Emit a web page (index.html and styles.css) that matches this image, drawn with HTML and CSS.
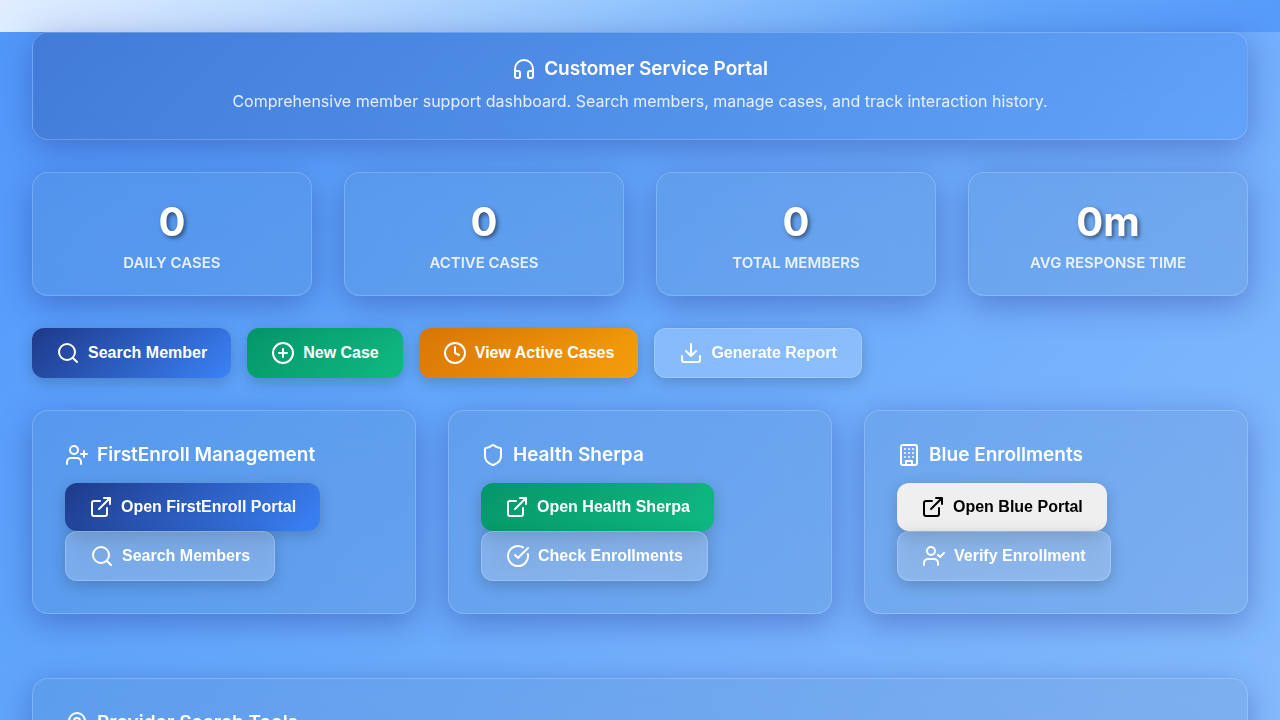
FILE: index.html
```html
<!DOCTYPE html>
<html lang="en">
<head>
<meta charset="utf-8">
<meta name="viewport" content="width=device-width, initial-scale=1">
<title>Customer Service Portal</title>
<link rel="stylesheet" href="styles.css">
</head>
<body>
<svg class="sprite" aria-hidden="true">
  <symbol id="i-headphones" viewBox="0 0 24 24"><path d="M3 14h3a2 2 0 0 1 2 2v3a2 2 0 0 1-2 2H5a2 2 0 0 1-2-2v-7a9 9 0 0 1 18 0v7a2 2 0 0 1-2 2h-1a2 2 0 0 1-2-2v-3a2 2 0 0 1 2-2h3"/></symbol>
  <symbol id="i-search" viewBox="0 0 24 24"><circle cx="11" cy="11" r="8"/><path d="m21 21-4.3-4.3"/></symbol>
  <symbol id="i-plus" viewBox="0 0 24 24"><circle cx="12" cy="12" r="10"/><path d="M8 12h8M12 8v8"/></symbol>
  <symbol id="i-clock" viewBox="0 0 24 24"><circle cx="12" cy="12" r="10"/><path d="M12 6v6l4 2"/></symbol>
  <symbol id="i-download" viewBox="0 0 24 24"><path d="M21 15v4a2 2 0 0 1-2 2H5a2 2 0 0 1-2-2v-4M7 10l5 5 5-5M12 15V3"/></symbol>
  <symbol id="i-user-plus" viewBox="0 0 24 24"><path d="M16 21v-2a4 4 0 0 0-4-4H6a4 4 0 0 0-4 4v2"/><circle cx="9" cy="7" r="4"/><path d="M19 8v6M22 11h-6"/></symbol>
  <symbol id="i-user-check" viewBox="0 0 24 24"><path d="M16 21v-2a4 4 0 0 0-4-4H6a4 4 0 0 0-4 4v2"/><circle cx="9" cy="7" r="4"/><path d="m16 11 2 2 4-4"/></symbol>
  <symbol id="i-shield" viewBox="0 0 24 24"><path d="M20 13c0 5-3.500 7.500-7.660 8.950a1 1 0 0 1-.67-.01C7.500 20.500 4 18 4 13V6a1 1 0 0 1 1-1c2 0 4.500-1.200 6.240-2.720a1.170 1.170 0 0 1 1.520 0C14.510 3.810 17 5 19 5a1 1 0 0 1 1 1z"/></symbol>
  <symbol id="i-building" viewBox="0 0 24 24"><rect x="4" y="2" width="16" height="20" rx="2"/><path d="M9 22v-4h6v4M8 6h.01M16 6h.01M12 6h.01M12 10h.01M12 14h.01M16 10h.01M16 14h.01M8 10h.01M8 14h.01"/></symbol>
  <symbol id="i-external" viewBox="0 0 24 24"><path d="M15 3h6v6M10 14 21 3M18 13v6a2 2 0 0 1-2 2H5a2 2 0 0 1-2-2V8a2 2 0 0 1 2-2h6"/></symbol>
  <symbol id="i-check" viewBox="0 0 24 24"><path d="M21.801 10A10 10 0 1 1 17 3.335M9 11l3 3L22 4"/></symbol>
  <symbol id="i-pin" viewBox="0 0 24 24"><path d="M20 10c0 4.993-5.539 10.193-7.399 11.799a1 1 0 0 1-1.202 0C9.539 20.193 4 14.993 4 10a8 8 0 0 1 16 0"/><circle cx="12" cy="10" r="3"/></symbol>
</svg>

<main class="page">
  <header class="glass hero">
    <h1 class="title"><svg class="icon"><use href="#i-headphones"/></svg>Customer Service Portal</h1>
    <p class="lead">Comprehensive member support dashboard. Search members, manage cases, and track interaction history.</p>
  </header>

  <section class="stats" aria-label="Statistics">
    <div class="glass stat"><div class="stat-value">0</div><div class="stat-label">Daily Cases</div></div>
    <div class="glass stat"><div class="stat-value">0</div><div class="stat-label">Active Cases</div></div>
    <div class="glass stat"><div class="stat-value">0</div><div class="stat-label">Total Members</div></div>
    <div class="glass stat"><div class="stat-value">0m</div><div class="stat-label">Avg Response Time</div></div>
  </section>

  <div class="actions">
    <button type="button" class="btn btn-primary"><svg class="icon"><use href="#i-search"/></svg>Search Member</button>
    <button type="button" class="btn btn-success"><svg class="icon"><use href="#i-plus"/></svg>New Case</button>
    <button type="button" class="btn btn-warning"><svg class="icon"><use href="#i-clock"/></svg>View Active Cases</button>
    <button type="button" class="btn btn-ghost"><svg class="icon"><use href="#i-download"/></svg>Generate Report</button>
  </div>

  <section class="cards">
    <article class="glass card">
      <h2 class="title"><svg class="icon"><use href="#i-user-plus"/></svg>FirstEnroll Management</h2>
      <div class="stack">
        <button type="button" class="btn btn-primary"><svg class="icon"><use href="#i-external"/></svg>Open FirstEnroll Portal</button>
        <button type="button" class="btn btn-ghost"><svg class="icon"><use href="#i-search"/></svg>Search Members</button>
      </div>
    </article>
    <article class="glass card">
      <h2 class="title"><svg class="icon"><use href="#i-shield"/></svg>Health Sherpa</h2>
      <div class="stack">
        <button type="button" class="btn btn-success"><svg class="icon"><use href="#i-external"/></svg>Open Health Sherpa</button>
        <button type="button" class="btn btn-ghost"><svg class="icon"><use href="#i-check"/></svg>Check Enrollments</button>
      </div>
    </article>
    <article class="glass card">
      <h2 class="title"><svg class="icon"><use href="#i-building"/></svg>Blue Enrollments</h2>
      <div class="stack">
        <button type="button" class="btn"><svg class="icon"><use href="#i-external"/></svg>Open Blue Portal</button>
        <button type="button" class="btn btn-ghost"><svg class="icon"><use href="#i-user-check"/></svg>Verify Enrollment</button>
      </div>
    </article>
  </section>

  <section class="glass card tools">
    <h2 class="title"><svg class="icon"><use href="#i-pin"/></svg>Provider Search Tools</h2>
  </section>
</main>
</body>
</html>
```

FILE: styles.css
```css
* { box-sizing: border-box; }

html { scrollbar-width: none; }

body {
  margin: 0;
  min-height: 100vh;
  font-family: Inter, "Liberation Sans", sans-serif;
  font-size: 16px;
  color: #fff;
  background:
    linear-gradient(135deg, #e0edff 0, #bbdafe 25%, #93c5fd 48%, #60a5fa 78%, #569afa 100%) 0 0 / 100% 32px no-repeat,
    linear-gradient(135deg, #5097fb 0, #60a5fb 500px, #75b1fc 1000px, #86bcfd 1450px);
}

.sprite { display: none; }

.page { padding: 32px; }

.glass {
  border: 1px solid rgba(255, 255, 255, 0.2);
  border-radius: 16px;
  background: rgba(70, 90, 130, 0.1);
  box-shadow: 0 8px 32px rgba(31, 38, 135, 0.37);
  backdrop-filter: blur(20px);
}

.icon {
  width: 24px;
  height: 24px;
  flex: none;
  fill: none;
  stroke: currentColor;
  stroke-width: 2;
  stroke-linecap: round;
  stroke-linejoin: round;
}

.title {
  display: flex;
  align-items: center;
  gap: 8px;
  margin: 0;
  font-size: 19px;
  line-height: 24px;
  font-weight: 600;
}

.hero {
  padding: 24px 24px 26px;
  background: linear-gradient(135deg, rgba(30, 58, 138, 0.3), rgba(59, 130, 246, 0.3));
}

.hero .title { justify-content: center; }

.lead {
  margin: 8px 0 0;
  line-height: 24px;
  text-align: center;
  color: rgba(255, 255, 255, 0.85);
}

.stats {
  display: grid;
  grid-template-columns: repeat(4, 1fr);
  gap: 32px;
  margin: 32px 0;
}

.stat { padding: 24px; text-align: center; }

.stat-value {
  font-size: 40px;
  line-height: 50px;
  font-weight: 700;
  text-shadow: 2px 2px 4px rgba(0, 0, 0, 0.5);
}

.stat-label {
  margin-top: 8px;
  font-size: 15px;
  line-height: 16px;
  font-weight: 600;
  text-transform: uppercase;
  color: rgba(255, 255, 255, 0.85);
}

.actions {
  display: flex;
  flex-wrap: wrap;
  gap: 16px;
  margin-bottom: 32px;
}

.btn {
  display: inline-flex;
  align-items: center;
  gap: 8px;
  padding: 12px 24px;
  border: 0;
  border-radius: 12px;
  background: #efefef;
  color: #000;
  font: 600 16px "Liberation Sans", sans-serif;
  box-shadow: 0 4px 15px rgba(0, 0, 0, 0.2);
  cursor: pointer;
}

.btn-primary { background: linear-gradient(135deg, #1e3a8a, #3b82f6); color: #fff; }
.btn-success { background: linear-gradient(135deg, #059669, #10b981); color: #fff; }
.btn-warning { background: linear-gradient(135deg, #d97706, #f59e0b); color: #fff; }

.btn-ghost {
  border: 1px solid rgba(255, 255, 255, 0.2);
  background: rgba(255, 255, 255, 0.2);
  color: #fff;
  backdrop-filter: blur(10px);
}

.cards {
  display: grid;
  grid-template-columns: repeat(3, 1fr);
  gap: 32px;
  margin-bottom: 64px;
}

.card { padding: 32px; }

.stack {
  display: flex;
  flex-direction: column;
  align-items: flex-start;
  margin-top: 16px;
}
```
